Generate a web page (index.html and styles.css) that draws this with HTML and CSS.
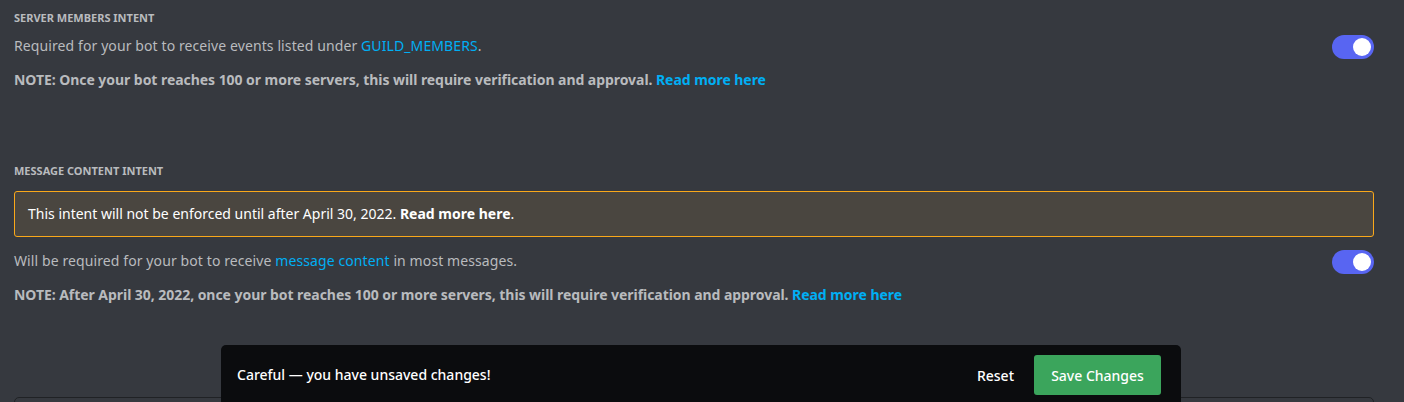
FILE: index.html
```html
<!DOCTYPE html>
<html>
<head>
<meta charset="utf-8">
<link rel="stylesheet" href="styles.css">
</head>
<body>
<main class="page">
  <section class="intent first">
    <h2 class="intent-title">Server Members Intent</h2>
    <div class="intent-row">
      <p class="intent-desc">Required for your bot to receive events listed under <a class="link">GUILD_MEMBERS</a>.</p>
      <span class="toggle"><span class="knob"></span></span>
    </div>
    <p class="intent-note">NOTE: Once your bot reaches 100 or more servers, this will require verification and approval. <a class="link">Read more here</a></p>
  </section>

  <section class="intent second">
    <h2 class="intent-title">Message Content Intent</h2>
    <div class="warning">This intent will not be enforced until after April 30, 2022. <strong>Read more here</strong>.</div>
    <div class="intent-row">
      <p class="intent-desc">Will be required for your bot to receive <a class="link">message content</a> in most messages.</p>
      <span class="toggle"><span class="knob"></span></span>
    </div>
    <p class="intent-note">NOTE: After April 30, 2022, once your bot reaches 100 or more servers, this will require verification and approval. <a class="link">Read more here</a></p>
  </section>

  <div class="next-card"></div>
</main>

<div class="notice">
  <span class="notice-text">Careful — you have unsaved changes!</span>
  <div class="notice-actions">
    <button class="btn-reset">Reset</button>
    <button class="btn-save">Save Changes</button>
  </div>
</div>
</body>
</html>
```

FILE: styles.css
```css
html, body {
  margin: 0;
  padding: 0;
  background: #36393f;
  height: 100%;
  overflow: hidden;
}
body {
  font-family: "Noto Sans", "Open Sans", sans-serif;
  color: #b9bbbe;
}
.page {
  padding: 10px 30px 0 14px;
}
.intent-title {
  margin: 0;
  font-size: 11px;
  line-height: 16px;
  font-weight: 700;
  text-transform: uppercase;
  color: #b9bbbe;
}
.intent-row {
  display: flex;
  align-items: center;
  justify-content: space-between;
  margin-top: 10px;
}
.second .intent-row {
  margin-top: 14px;
}
.intent-desc {
  margin: 0;
  font-size: 14px;
  line-height: 20px;
  letter-spacing: 0.1px;
  color: #b9bbbe;
}
.intent-note {
  margin: 14px 0 0;
  font-size: 14px;
  line-height: 20px;
  font-weight: 700;
  letter-spacing: -0.05px;
  color: #b9bbbe;
}
.link {
  color: #00aff4;
  cursor: pointer;
}
.second {
  margin-top: 73px;
}
.warning {
  margin-top: 12px;
  box-sizing: border-box;
  height: 46px;
  line-height: 44px;
  padding: 0 13px;
  border: 1px solid #faa81a;
  border-radius: 3px;
  background: #4a4640;
  color: #fff;
  font-size: 14px;
}
.warning strong { font-weight: 700; }
.toggle {
  width: 42px;
  height: 24px;
  border-radius: 12px;
  background: #5865f2;
  position: relative;
  flex: none;
  margin: -1px 0 -3px;
}
.knob {
  position: absolute;
  top: 3px;
  right: 3px;
  width: 18px;
  height: 18px;
  border-radius: 50%;
  background: #fff;
}
.next-card {
  margin-top: 92px;
  height: 40px;
  border: 1px solid #202225;
  border-radius: 5px;
}
.notice {
  position: fixed;
  left: 221px;
  top: 345px;
  width: 960px;
  height: 62px;
  box-sizing: border-box;
  background: #0b0c0e;
  border-radius: 5px;
  display: flex;
  align-items: flex-start;
  justify-content: space-between;
  padding: 10px 20px 0 16px;
}
.notice-text {
  color: #fff;
  font-size: 14px;
  font-weight: 500;
  line-height: 40px;
}
.notice-actions {
  display: flex;
  align-items: center;
  gap: 8px;
}
.btn-reset, .btn-save {
  font-family: inherit;
  font-size: 14px;
  font-weight: 500;
  border: none;
  cursor: pointer;
  height: 40px;
  border-radius: 3px;
}
.btn-reset {
  background: transparent;
  color: #fff;
  padding: 0 12px;
}
.btn-save {
  background: #3ba55c;
  color: #fff;
  width: 127px;
}
```
